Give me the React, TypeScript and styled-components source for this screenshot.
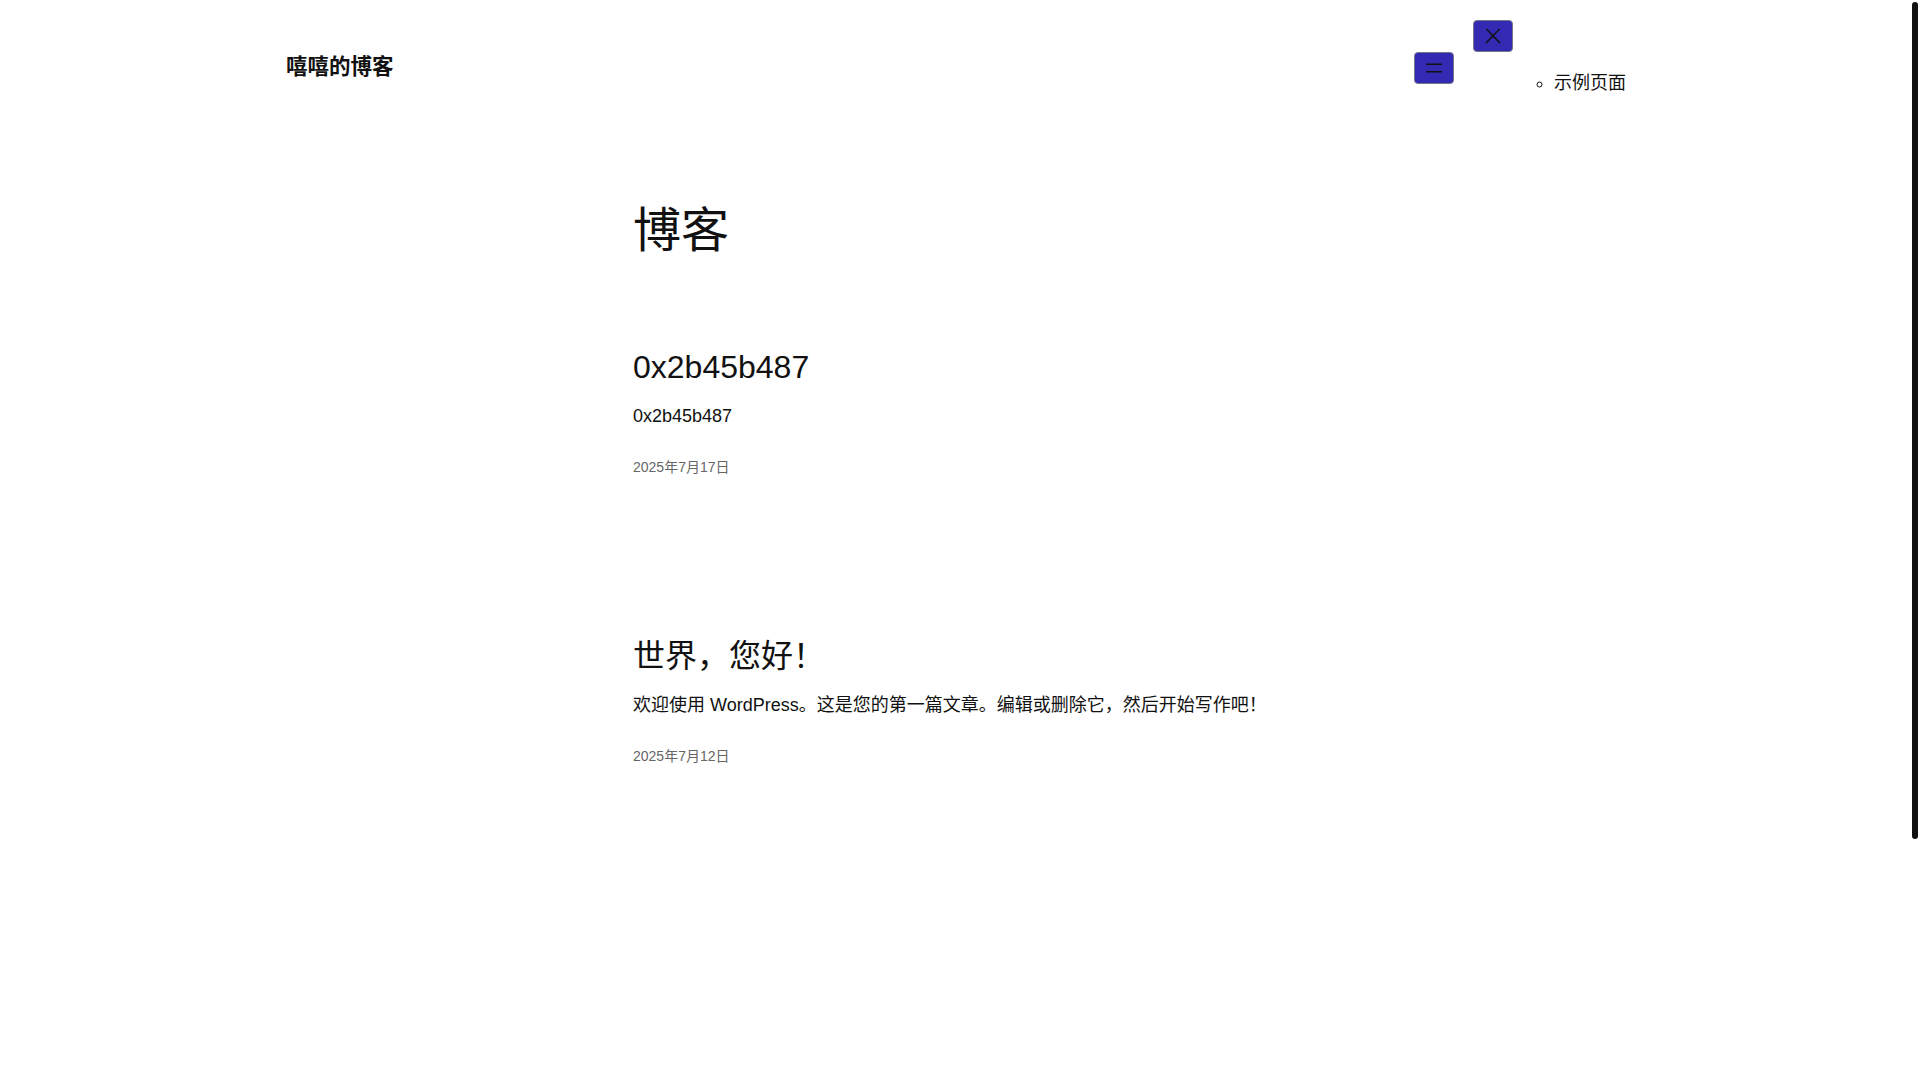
import React from "react";
import styled, { createGlobalStyle } from "styled-components";

const GlobalStyle = createGlobalStyle`
  html, body {
    margin: 0;
    padding: 0;
    background: #ffffff;
  }
  body {
    font-family: "Liberation Sans", "Noto Sans CJK SC", sans-serif;
    color: #111111;
  }
  * { box-sizing: border-box; }
`;

const Page = styled.div`
  width: calc(100% - 8px);
  min-height: 1393px;
  display: flex;
  flex-direction: column;
`;

const ScrollThumb = styled.div`
  position: fixed;
  top: 2px;
  right: 2px;
  width: 6px;
  height: 837px;
  border-radius: 3px;
  background: #111111;
`;

const Header = styled.header`
  width: 1340px;
  max-width: 100%;
  margin: 0 auto;
  padding-top: 20px;
  display: flex;
  align-items: center;
  justify-content: space-between;
`;

const SiteTitle = styled.a`
  font-size: 21.5px;
  font-weight: 700;
  line-height: 1.3;
  color: #111111;
  text-decoration: none;
`;

const NavArea = styled.nav`
  display: flex;
  align-items: center;
  gap: 19px;
`;

const IconButton = styled.button`
  width: 40px;
  height: 32px;
  padding: 0;
  display: flex;
  align-items: center;
  justify-content: center;
  background: #3329b3;
  border: 1px solid #77778a;
  border-radius: 4px;
  color: #111111;
  cursor: pointer;
`;

const Overlay = styled.div`
  display: flex;
  align-items: flex-start;
`;

const MenuList = styled.ul`
  margin: 50px 0 18px;
  padding-left: 41px;
  list-style: circle;
  font-size: 18px;
  line-height: 27px;
`;

const MenuItem = styled.li`
  color: #111111;
`;

const Main = styled.main`
  width: 646px;
  margin: 0 auto;
  padding-top: 86px;
`;

const PageHeading = styled.h1`
  margin: 0;
  font-size: 48px;
  font-weight: 400;
  line-height: 60px;
`;

const Post = styled.article<{ $first?: boolean }>`
  margin-top: ${(p) => (p.$first ? "87px" : "159px")};
`;

const PostTitle = styled.h2`
  margin: 0;
  font-size: 32px;
  font-weight: 400;
  line-height: 38px;
`;

const Excerpt = styled.p`
  margin: 17px 0 0;
  font-size: 18px;
  line-height: 27px;
`;

const PostDate = styled.time`
  display: block;
  margin-top: 27px;
  font-size: 14px;
  line-height: 21px;
  color: #666666;
`;

const MenuIcon = () => (
  <svg width="24" height="24" viewBox="0 0 24 24" fill="currentColor" aria-hidden="true">
    <rect x="4" y="7.5" width="16" height="1.5" />
    <rect x="4" y="15" width="16" height="1.5" />
  </svg>
);

const CloseIcon = () => (
  <svg width="24" height="24" viewBox="0 0 24 24" fill="currentColor" aria-hidden="true">
    <path d="M13 11.8l6.1-6.3-1-1-6.1 6.2-6.1-6.2-1 1 6.1 6.3-6.5 6.7 1 1 6.5-6.6 6.5 6.6 1-1z" />
  </svg>
);

const posts = [
  { title: "0x2b45b487", excerpt: "0x2b45b487", date: "2025年7月17日" },
  {
    title: "世界，您好！",
    excerpt: "欢迎使用 WordPress。这是您的第一篇文章。编辑或删除它，然后开始写作吧！",
    date: "2025年7月12日",
  },
];

export default function App() {
  return (
    <Page>
      <GlobalStyle />
      <Header>
        <SiteTitle href="#">嘻嘻的博客</SiteTitle>
        <NavArea>
          <IconButton aria-label="打开菜单">
            <MenuIcon />
          </IconButton>
          <Overlay>
            <IconButton aria-label="关闭菜单">
              <CloseIcon />
            </IconButton>
            <MenuList>
              <MenuItem>示例页面</MenuItem>
            </MenuList>
          </Overlay>
        </NavArea>
      </Header>
      <Main>
        <PageHeading>博客</PageHeading>
        {posts.map((post, i) => (
          <Post key={post.date} $first={i === 0}>
            <PostTitle>{post.title}</PostTitle>
            <Excerpt>{post.excerpt}</Excerpt>
            <PostDate>{post.date}</PostDate>
          </Post>
        ))}
      </Main>
      <ScrollThumb aria-hidden="true" />
    </Page>
  );
}
